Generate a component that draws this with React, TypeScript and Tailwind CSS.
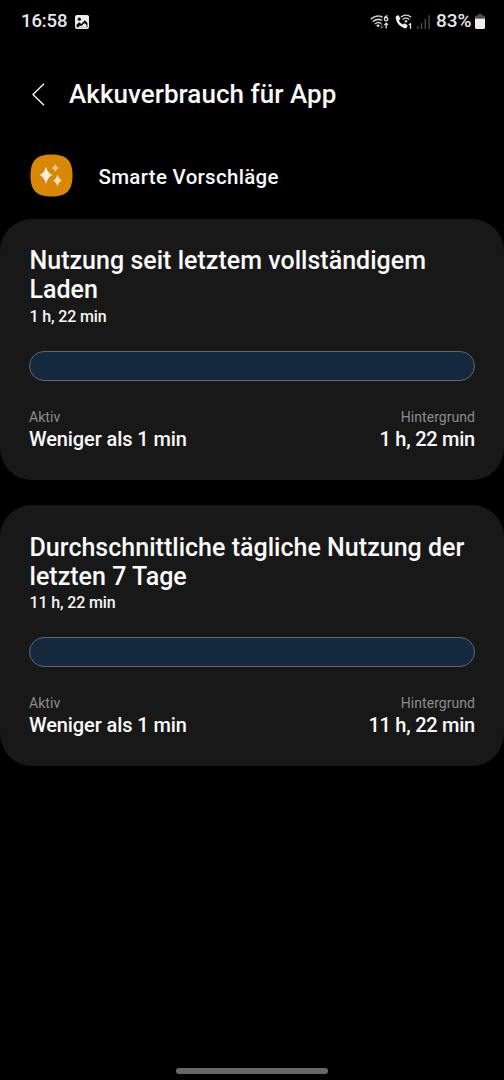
import { FunctionComponent } from "react";

interface Usage {
  title: string[];
  total: string;
  active: string;
  background: string;
}

const usages: Usage[] = [
  {
    title: ["Nutzung seit letztem vollständigem", "Laden"],
    total: "1 h, 22 min",
    active: "Weniger als 1 min",
    background: "1 h, 22 min",
  },
  {
    title: ["Durchschnittliche tägliche Nutzung der", "letzten 7 Tage"],
    total: "11 h, 22 min",
    active: "Weniger als 1 min",
    background: "11 h, 22 min",
  },
];

const StatusBar: FunctionComponent = () => {
  return (
    <div className="flex h-[43px] items-center justify-between pl-[21px] pr-[19px]">
      <div className="flex items-center gap-[7px]">
        <span className="w-[47px] whitespace-nowrap text-[18.5px] font-medium tracking-[-0.1px] text-[#e8e8e8]">
          16:58
        </span>
        <svg width="14" height="14" viewBox="0 0 14 14">
          <rect width="14" height="14" rx="2" fill="#eeeeee" />
          <circle cx="4.3" cy="4.2" r="1.6" fill="#000" />
          <path d="M1.6 12.2V9.4l2.7-2.2 2 1.7 3.5-3.6 2.6 2.6v4.3z" fill="#000" />
          <path d="M3.4 12.2l1.6-1.9 1.2 1 3.3-3.3 2.1 2.1v2.1z" fill="#eeeeee" />
        </svg>
      </div>
      <div className="flex items-center">
        <svg width="20" height="16" viewBox="0 0 20 16" className="mr-[5px]">
          <g fill="none" stroke="#c8c8c8" strokeWidth="1.6">
            <path d="M0.8 5.2Q6.8 0 12.6 3.2" />
            <path d="M2.8 7.6Q7.6 3.8 12 6.4" />
            <path d="M4.8 10Q8 7.4 11 9.4" />
          </g>
          <path d="M6.2 11.2q1.8-1.2 3.6 0L8 13.6z" fill="#e0e0e0" />
          <path
            d="M17.6 1.8Q14.4 1.8 14.4 5.2a1.7 1.7 0 1 0 1.7-1.7q-1.4 0-1.7 1.4"
            fill="none"
            stroke="#dddddd"
            strokeWidth="1.3"
          />
          <path d="M11.8 9v5M10.2 12.4l1.6 1.8 1.6-1.8" fill="none" stroke="#777777" strokeWidth="1" />
          <path d="M16.2 14.6V9.4M14.4 11l1.8-1.9L18 11" fill="none" stroke="#dddddd" strokeWidth="1.3" />
        </svg>
        <svg width="18" height="16" viewBox="0 0 18 16" className="mr-[4px]">
          <path
            d="M1.5 1.8L3.6 1.2 5.4 4.8 3.9 6.4Q5.1 9.3 8 10.6L9.6 9.3 12.6 11.2 12 13.4Q10.8 14.8 8.8 14Q2 11.4 0.7 4.2Q0.5 2.4 1.5 1.8z"
            fill="#eeeeee"
          />
          <g fill="none" stroke="#d6d6d6" strokeWidth="1.3">
            <path d="M5.8 3.2Q11 -1 16.2 3.2" />
            <path d="M7.6 5.4Q11 2.8 14.4 5.4" />
          </g>
          <path d="M9.2 6.8Q11 5.6 12.8 6.8L11 9z" fill="#e5e5e5" />
          <path d="M13.8 10.8l1.7-1v5" fill="none" stroke="#e5e5e5" strokeWidth="1.3" />
        </svg>
        <svg width="13" height="14" viewBox="0 0 13 14" className="mr-[6px]" fill="#4a4a4a">
          <rect x="0" y="11" width="1.4" height="3" />
          <rect x="3.8" y="8" width="1.4" height="6" />
          <rect x="7.6" y="4" width="1.4" height="10" />
          <rect x="11.4" y="0" width="1.4" height="14" />
        </svg>
        <span className="w-[37px] whitespace-nowrap text-[19px] font-medium text-[#e8e8e8]">
          83%
        </span>
        <svg width="10" height="15" viewBox="0 0 10 15" className="ml-[2px]">
          <path d="M3 0h4v1.5h1.6q1.4 0 1.4 1.4V4.5H0V2.9q0-1.4 1.4-1.4H3z" fill="#4c4c4c" />
          <path d="M0 4.5h10v9q0 1.5-1.5 1.5h-7Q0 15 0 13.5z" fill="#eeeeee" />
        </svg>
      </div>
    </div>
  );
};

const UsageCard: FunctionComponent<{ usage: Usage }> = ({ usage }) => {
  return (
    <section className="h-[261px] rounded-[32px] bg-[#181818] px-[29px] pt-[27.3px]">
      <h2 className="pl-[0.5px] text-[25px] font-medium leading-[29px] tracking-[0.02px] text-[#fafafa]">
        {usage.title.map((line) => (
          <span key={line} className="block whitespace-nowrap">
            {line}
          </span>
        ))}
      </h2>
      <p className="mt-[2.7px] pl-[0.5px] text-[16px] font-medium leading-5 tracking-[-0.15px] text-[#f5f5f5]">
        {usage.total}
      </p>
      <div className="mt-6 h-[30px] rounded-full border border-[#5f6872] bg-[#14293e]" />
      <dl className="mt-[26px] flex justify-between">
        <div>
          <dt className="text-[14px] leading-5 tracking-[0.05px] text-[#8c8c8c]">Aktiv</dt>
          <dd className="text-[20px] font-medium leading-6 tracking-[-0.1px] text-[#fafafa]">
            {usage.active}
          </dd>
        </div>
        <div className="text-right">
          <dt className="text-[14px] leading-5 tracking-[0.05px] text-[#8c8c8c]">
            Hintergrund
          </dt>
          <dd className="text-[20px] font-medium leading-6 tracking-[-0.25px] text-[#fafafa]">
            {usage.background}
          </dd>
        </div>
      </dl>
    </section>
  );
};

export default function App() {
  return (
    <div className="flex h-[1080px] w-[504px] flex-col overflow-hidden bg-black font-['Roboto',sans-serif]">
      <StatusBar />
      <header className="flex h-[102px] items-center pl-[32px]">
        <svg width="13" height="23" viewBox="0 0 13 23" fill="none" stroke="#f0f0f0" strokeWidth="1.5">
          <path d="M12 0.8L1 11.5L12 22.2" />
        </svg>
        <h1 className="ml-[24px] whitespace-nowrap text-[26px] font-medium tracking-[0.04px] text-[#fafafa]">
          Akkuverbrauch für App
        </h1>
      </header>
      <div className="flex h-[60px] items-center pl-[30px]">
        <svg width="43" height="43" viewBox="0 0 43 43">
          <path
            d="M21.5 0.5C36.5 0.5 42.5 6.5 42.5 21.5S36.5 42.5 21.5 42.5S0.5 36.5 0.5 21.5S6.5 0.5 21.5 0.5z"
            fill="#d98804"
          />
          <path d="M16 12.5Q17.8 19.2 22.5 21Q17.8 22.8 16 30Q14.2 22.8 9.5 21Q14.2 19.2 16 12.5z" fill="#f6ece0" />
          <path d="M25.3 10Q26.3 13 29 14Q26.3 15 25.3 18Q24.3 15 21.6 14Q24.3 13 25.3 10z" fill="#efc88c" />
          <path d="M27.5 20.5Q28.8 25.2 32 26.5Q28.8 27.8 27.5 32.5Q26.2 27.8 23 26.5Q26.2 25.2 27.5 20.5z" fill="#f4e2c8" />
        </svg>
        <span className="ml-[25.5px] mt-[4px] whitespace-nowrap text-[20.5px] font-medium tracking-[0.3px] text-[#fafafa]">
          Smarte Vorschläge
        </span>
      </div>
      <main className="mt-[14px] flex flex-col gap-[25.3px]">
        {usages.map((usage) => (
          <UsageCard key={usage.total} usage={usage} />
        ))}
      </main>
      <div className="mb-[6px] mt-auto h-[6px] w-[152px] self-center rounded-full bg-[#686868]" />
    </div>
  );
}
